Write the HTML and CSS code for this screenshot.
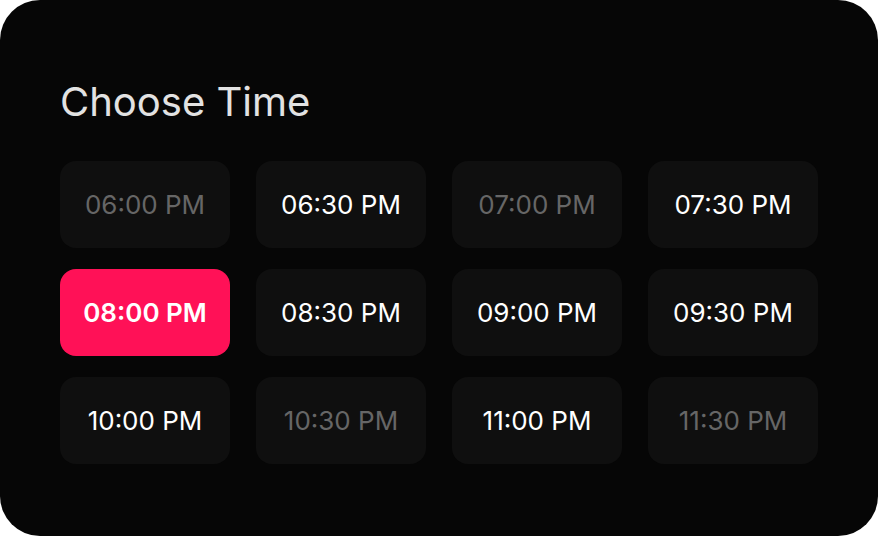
FILE: index.html
```html
<!DOCTYPE html>
<html lang="en">
<head>
    <meta charset="UTF-8">
    <meta name="viewport" content="width=device-width, initial-scale=1.0">
    <title>Choose Time</title>
    <link rel="stylesheet" href="styles.css">
</head>
<body>

<div class="card">
    <h2 class="title">Choose Time</h2>

    <div class="times">
        <button class="slot disabled">06:00 PM</button>
        <button class="slot">06:30 PM</button>
        <button class="slot disabled">07:00 PM</button>
        <button class="slot">07:30 PM</button>
        <button class="slot selected">08:00 PM</button>
        <button class="slot">08:30 PM</button>
        <button class="slot">09:00 PM</button>
        <button class="slot">09:30 PM</button>
        <button class="slot">10:00 PM</button>
        <button class="slot disabled">10:30 PM</button>
        <button class="slot">11:00 PM</button>
        <button class="slot disabled">11:30 PM</button>
    </div>
</div>

</body>
</html>
```

FILE: styles.css
```css
body {
    margin: 0;
    background: #fff;
    font-family: Inter, "Noto Sans", sans-serif;
}
.card {
    width: 878px;
    height: 536px;
    box-sizing: border-box;
    padding: 80px 60px 0 60px;
    background-color: #060606;
    border-radius: 40px;
}
.title {
    margin: 0 0 37px 0;
    font-size: 40px;
    font-weight: 400;
    line-height: 44px;
    color: #e2e2e2;
    letter-spacing: 0;
}
.times {
    display: grid;
    grid-template-columns: repeat(4, 170px);
    grid-auto-rows: 87px;
    column-gap: 26px;
    row-gap: 21px;
}
.slot {
    font-family: inherit;
    font-size: 26px;
    font-weight: 400;
    color: #fff;
    background-color: #0f0f0f;
    border: none;
    border-radius: 16px;
    cursor: pointer;
}
.slot.disabled {
    color: #666;
}
.slot.selected {
    background-color: #ff1157;
    font-weight: 600;
}
```
